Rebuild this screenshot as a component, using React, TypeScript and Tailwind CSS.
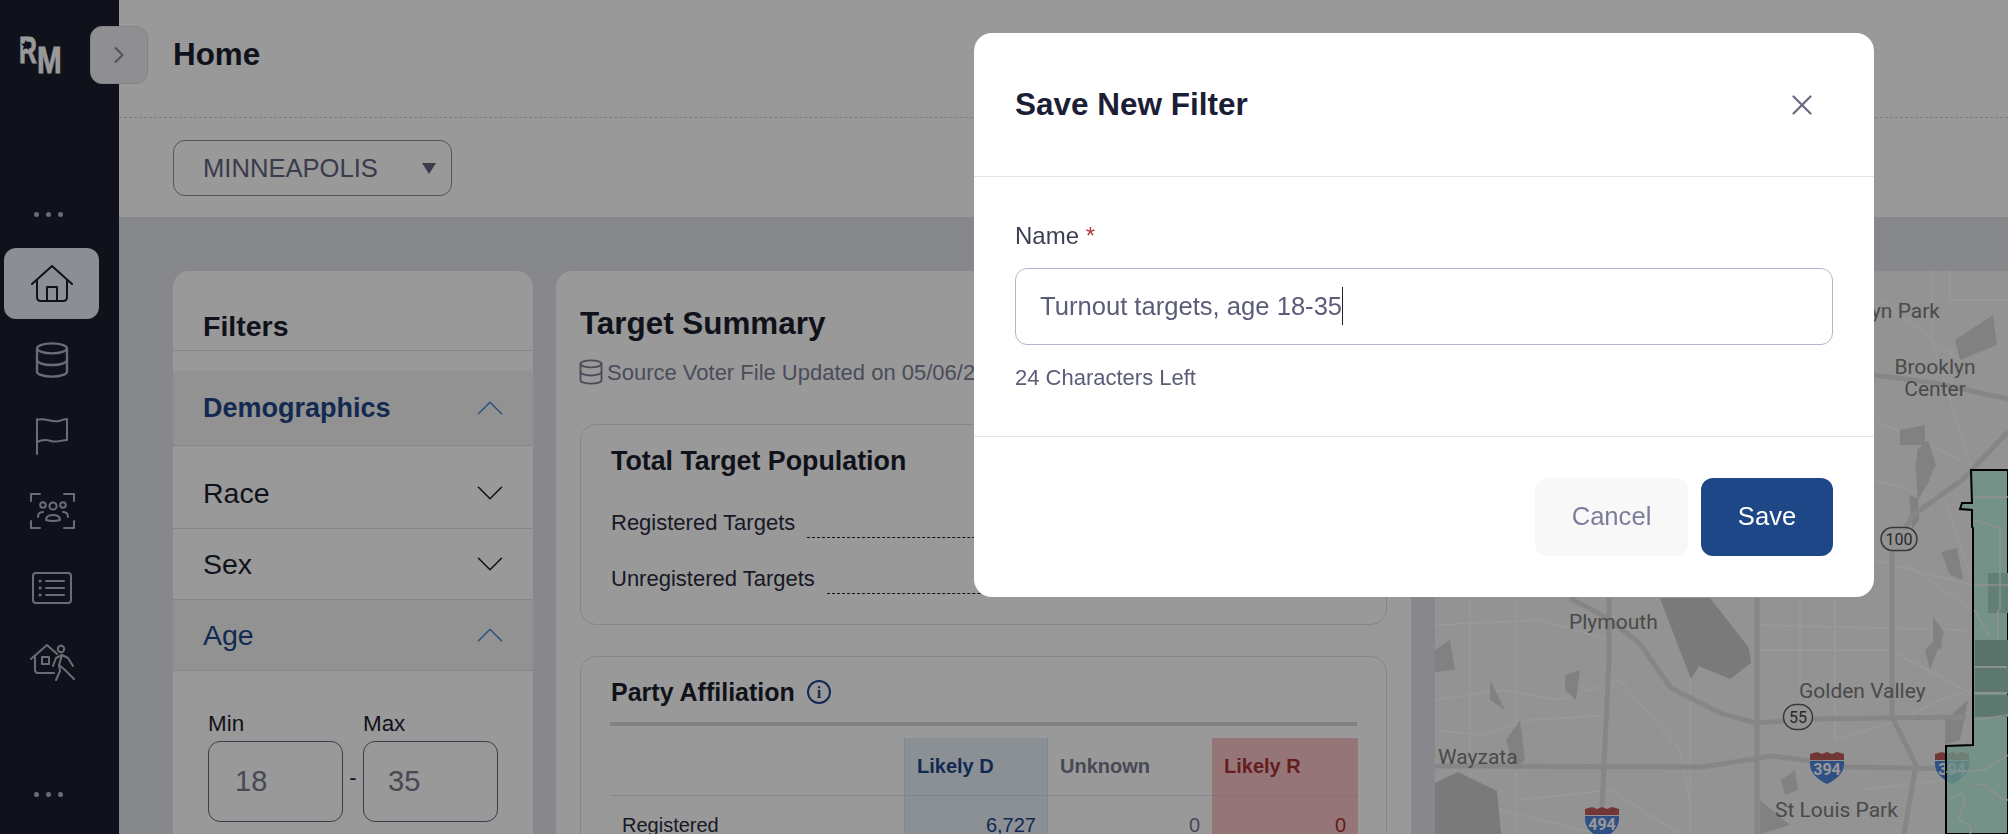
import { ChevronDown, ChevronRight, ChevronUp, Database, X } from "lucide-react";

const roads = [
  "M1435 766 L1702 767 L1772 756 L1811 761 L1846 767 L1972 769",
  "M1609 598 L1609 660 L1602 809",
  "M1757 598 L1757 834",
  "M1570 598 L1609 619 L1640 644 L1671 688 L1722 714 L1757 723 L1811 719 L1966 717",
  "M1892 553 L1892 717 L1916 765 L1904 834",
  "M1892 553 L1912 516 L1962 480 L2008 432",
  "M1874 375 L1935 383 L2008 399",
];

const minorRoads = [
  "M1435 625 L1540 620 L1610 640",
  "M1435 700 L1500 690 L1560 700 L1620 680",
  "M1435 730 L1480 735 L1530 720 L1609 715",
  "M1470 598 L1470 834",
  "M1516 598 L1516 834",
  "M1690 598 L1690 834",
  "M1800 598 L1800 700",
  "M1835 598 L1835 740",
  "M1757 625 L1965 630",
  "M1757 650 L1890 650 L1965 690",
  "M1874 480 L1945 500 L1972 580",
  "M1874 420 L1960 460",
  "M1900 560 L1972 610",
  "M1874 560 L1972 585",
  "M1520 800 L1610 790 L1680 834",
  "M1620 680 L1680 750 L1690 800",
  "M1835 740 L1900 720 L1940 700 L1972 690",
  "M1860 790 L1945 780",
  "M1932 271 L1932 340 L1972 470",
  "M1880 300 L1960 360",
  "M1950 271 L1950 300 L2008 300",
  "M1435 800 L1500 810 L1600 834",
];

const lakes = [
  "1660,598 1710,598 1749,648 1751,663 1730,679 1699,666 1691,679 1679,648",
  "1435,783 1458,772 1497,791 1501,834 1435,834",
];

const patches = [
  "1955,340 1993,315 1997,345 1960,360",
  "1917,450 1928,440 1936,465 1928,480 1917,478",
  "1909,495 1918,498 1919,520 1912,530",
  "1941,552 1957,548 1963,580 1950,575",
  "1435,650 1450,640 1455,670 1435,672",
  "1565,675 1580,670 1576,700 1565,690",
  "1506,740 1520,720 1525,760 1515,770",
  "1781,780 1795,770 1798,790 1785,795",
  "1925,650 1945,630 1930,670",
  "1915,460 1930,480 1918,500",
  "1945,720 1968,700 1960,740 1945,745",
  "1490,680 1505,710 1490,700",
  "1760,800 1790,825 1760,834",
  "1900,430 1925,425 1925,445 1900,445",
  "1933,617 1943,630 1941,650 1933,645",
];

const mapLabels = [
  { text: "Brooklyn Park", x: 1940, y: 318, anchor: "end" },
  { text: "Brooklyn", x: 1935, y: 374, anchor: "middle" },
  { text: "Center", x: 1935, y: 396, anchor: "middle" },
  { text: "Plymouth", x: 1569, y: 629, anchor: "start" },
  { text: "Golden Valley", x: 1799, y: 698, anchor: "start" },
  { text: "Wayzata", x: 1438, y: 764, anchor: "start" },
  { text: "St Louis Park", x: 1775, y: 817, anchor: "start" },
];

function InterstateShield({ x, y, label }: { x: number; y: number; label: string }) {
  return (
    <g transform={`translate(${x - 18} ${y - 16})`}>
      <path d="M1 3 L8 1 L13 3 L18 1 L23 3 L28 1 L35 3 L35 9 L1 9 Z" fill="#c05a5a" />
      <path d="M1 10 H35 C36 22 28 28 18 33 C8 28 0 22 1 10 Z" fill="#4f86dc" />
      <text x="18" y="24" textAnchor="middle" fontSize="16" fontWeight="700" fill="#ffffff" fontFamily="Roboto, sans-serif">
        {label}
      </text>
    </g>
  );
}

function RoadShield({ x, y, w, h, label }: { x: number; y: number; w: number; h: number; label: string }) {
  return (
    <g>
      <rect x={x - w / 2} y={y - h / 2} width={w} height={h} rx={h / 2} fill="#f4f4f4" stroke="#5c5c5c" strokeWidth="1.5" />
      <text x={x} y={y + 6} textAnchor="middle" fontSize="16" fill="#444444" fontFamily="Roboto, sans-serif">
        {label}
      </text>
    </g>
  );
}

function MapDrawing() {
  return (
    <svg viewBox="1435 271 573 563" className="w-full h-full block">
      <rect x="1435" y="271" width="573" height="563" fill="#f5f5f5" />
      {minorRoads.map((d) => (
        <path key={d} d={d} fill="none" stroke="#ffffff" strokeWidth="1.5" />
      ))}
      {lakes.map((p) => (
        <polygon key={p} points={p} fill="#cbcbcb" />
      ))}
      {patches.map((p) => (
        <polygon key={p} points={p} fill="#d8d8d8" />
      ))}
      {roads.map((d) => (
        <path key={d} d={d} fill="none" stroke="#e0e0e0" strokeWidth="5" />
      ))}
      {mapLabels.map((l) => (
        <text key={l.text} x={l.x} y={l.y} textAnchor={l.anchor as "start"} fontSize="21" fill="#7c7c7c" fontFamily="Roboto, sans-serif">
          {l.text}
        </text>
      ))}
      <RoadShield x={1899} y={539} w={36} h={23} label="100" />
      <RoadShield x={1798} y={717} w={29} h={25} label="55" />
      <InterstateShield x={1827} y={767} label="394" />
      <InterstateShield x={1952} y={767} label="394" />
      <InterstateShield x={1602} y={822} label="494" />
      <polygon
        points="1971,470 2008,470 2008,834 1946,834 1946,746 1973,745 1973,528 1972,527 1972,510 1960,509 1962,503 1972,503"
        fill="#b5f2df"
        fillOpacity="0.8"
        stroke="#000000"
        strokeWidth="2"
      />
      <rect x="1975" y="640" width="33" height="26" fill="#93bfb0" />
      <rect x="1975" y="668" width="33" height="24" fill="#9cc9b9" />
      <rect x="1975" y="695" width="33" height="22" fill="#9cc9b9" />
      <rect x="1988" y="573" width="20" height="40" fill="#a5d6c5" />
      <g fill="none" stroke="#f2f2f2" strokeWidth="2" strokeOpacity="0.7">
        <path d="M1974 497 H2008" />
        <path d="M1974 520 L2000 528 V610" />
        <path d="M1974 585 H2008" />
        <path d="M1974 610 L1990 636" />
        <path d="M1998 610 V640" />
        <path d="M1974 667 H2008" />
        <path d="M1974 693 H2008" />
        <path d="M1974 720 L2008 715" />
        <path d="M1946 772 L1985 770 L2008 755" />
        <path d="M1950 800 C1960 790 1970 790 1960 815 C1955 825 1975 820 1970 834" />
        <path d="M1975 785 C1990 780 1995 800 2008 800" />
      </g>
    </svg>
  );
}

function Logo() {
  return (
    <svg viewBox="0 0 50 40" className="w-[50px] h-10 overflow-visible">
      <text transform="translate(0 26) scale(0.67 1)" fontSize="37" fontWeight="700" fill="#ffffff" stroke="#ffffff" strokeWidth="0.8" fontFamily="Liberation Sans, sans-serif">
        R
      </text>
      <text transform="translate(18 36) scale(0.8 1)" fontSize="37" fontWeight="700" fill="#ffffff" stroke="#ffffff" strokeWidth="0.8" fontFamily="Liberation Sans, sans-serif">
        M
      </text>
      <polygon points="7,3 8.5,6.5 12,6.8 9.3,9.2 10.2,13 7,11 3.8,13 4.7,9.2 2,6.8 5.5,6.5" fill="#1c1e2d" />
    </svg>
  );
}

function Dots() {
  return (
    <div className="flex gap-[7px] pl-[34px]">
      <span className="w-[5px] h-[5px] rounded-full bg-[#b4b5c6]" />
      <span className="w-[5px] h-[5px] rounded-full bg-[#b4b5c6]" />
      <span className="w-[5px] h-[5px] rounded-full bg-[#b4b5c6]" />
    </div>
  );
}

function HomeIcon() {
  return (
    <svg viewBox="0 0 42 38" className="w-[42px] h-[38px]" fill="none" stroke="#1c1e2d" strokeWidth="2" strokeLinecap="round" strokeLinejoin="round">
      <path d="M1 19 L21 1 L41 19" />
      <path d="M6 15 V32 Q6 36 10 36 H32 Q36 36 36 32 V15" />
      <path d="M16 36 V22 H26 V36" />
    </svg>
  );
}

function FlagIcon() {
  return (
    <svg viewBox="0 0 34 38" className="w-[34px] h-[38px]" fill="none" stroke="#b4b5c6" strokeWidth="2" strokeLinecap="round" strokeLinejoin="round">
      <path d="M2 37 V2" />
      <path d="M2 3 C10 0 16 6 24 4 C27 3 30 2 32 2 V23 C26 23 22 26 16 24 C10 22 6 23 2 25" />
    </svg>
  );
}

function PeopleIcon() {
  return (
    <svg viewBox="0 1 60 60" className="w-[60px] h-[60px]" fill="none" stroke="#b4b5c6" strokeWidth="2" strokeLinecap="round" strokeLinejoin="round">
      <path d="M9 20 V13 H18" />
      <path d="M42 13 H52 V20" />
      <path d="M9 40 V47 H18" />
      <path d="M42 47 H52 V40" />
      <circle cx="21" cy="24" r="2.8" />
      <circle cx="31" cy="25" r="3.6" />
      <circle cx="41" cy="24" r="2.8" />
      <path d="M24 39 Q24 34 31 34 Q38 34 38 39 Q31 41 24 39 Z" />
      <path d="M16 36 Q16 31 21 31" />
      <path d="M46 36 Q46 31 41 31" />
    </svg>
  );
}

function ListIcon() {
  return (
    <svg viewBox="0 0 40 32" className="w-10 h-8 overflow-visible" fill="none" stroke="#b4b5c6" strokeWidth="2" strokeLinecap="round">
      <rect x="1" y="1" width="38" height="30" rx="3" />
      <path d="M14 9 H32" />
      <path d="M14 16 H32" />
      <path d="M14 23 H32" />
      <path d="M8 9 H8.1" strokeWidth="3" />
      <path d="M8 16 H8.1" strokeWidth="3" />
      <path d="M8 23 H8.1" strokeWidth="3" />
    </svg>
  );
}

function CanvassIcon() {
  return (
    <svg viewBox="0 3 60 60" className="w-[60px] h-[60px]" fill="none" stroke="#b4b5c6" strokeWidth="2" strokeLinecap="round" strokeLinejoin="round">
      <path d="M9 28 L25 14 L35 23" />
      <path d="M13 26 V39 Q13 42 16 42 H32" />
      <rect x="20" y="26" width="7" height="7" />
      <circle cx="39" cy="18" r="3.2" />
      <path d="M31 35 L34 27 L40 24 L46 27 L51 35" />
      <path d="M40 24 L37 34 L43 39 L52 48" />
      <path d="M37 34 L38 40 L34 49" />
    </svg>
  );
}

function SideItem({ active, children }: { active?: boolean; children: React.ReactNode }) {
  return (
    <div className={active ? "ml-1 w-[95px] h-[71px] rounded-xl bg-[#ebedf5] flex items-center justify-center" : "ml-1 w-[95px] h-[71px] flex items-center justify-center"}>
      {children}
    </div>
  );
}

function FilterRow({ label, open, bold, height }: { label: string; open?: boolean; bold?: boolean; height: string }) {
  return (
    <div className={(open ? "bg-[#f3f3f3] " : "") + height + " flex items-center justify-between pl-[30px] pr-[20px] border-b border-[#e2e2e4]"}>
      <span className={(bold ? "font-bold text-[27px] " : "text-[28.5px] ") + (open ? "text-[#1e4788]" : "text-[#1c1e2d]")}>{label}</span>
      {open ? <ChevronUp size={46} strokeWidth={0.8} className="text-[#4a8bd8]" /> : <ChevronDown size={46} strokeWidth={0.8} className="text-[#1c1e2d]" />}
    </div>
  );
}

function TargetLine({ label }: { label: string }) {
  return (
    <div className="flex items-end gap-3 h-[39px]">
      <span className="text-[22px] leading-[28px] mb-[2px] text-[#2a2c3d]">{label}</span>
      <span className="flex-1 border-b border-dashed border-[#1c1e2d] mb-[1px]" />
    </div>
  );
}

export default function App() {
  return (
    <div className="relative flex h-screen w-full overflow-hidden bg-[#e1e3ea] font-['Liberation_Sans',Arial,sans-serif]">
      <aside className="w-[119px] shrink-0 bg-[#1c1e2d] flex flex-col">
        <div className="h-[248px] flex flex-col">
          <div className="pl-[19px] pt-[37px] h-[212px]">
            <Logo />
          </div>
          <Dots />
        </div>
        <nav className="flex flex-col gap-[5px]">
          <SideItem active>
            <HomeIcon />
          </SideItem>
          <SideItem>
            <Database size={40} strokeWidth={1.4} className="text-[#b4b5c6]" />
          </SideItem>
          <SideItem>
            <FlagIcon />
          </SideItem>
          <SideItem>
            <PeopleIcon />
          </SideItem>
          <SideItem>
            <ListIcon />
          </SideItem>
          <SideItem>
            <CanvassIcon />
          </SideItem>
        </nav>
        <div className="mt-[93px]">
          <Dots />
        </div>
      </aside>

      <button className="absolute left-[90px] top-[26px] w-[58px] h-[58px] rounded-xl bg-[#eeeef2] border border-[#dcdde3] flex items-center justify-center text-[#8e8fa3]">
        <ChevronRight size={28} strokeWidth={2} />
      </button>

      <main className="flex-1 min-w-0 flex flex-col">
        <header className="h-[118px] shrink-0 bg-white border-b border-dashed border-[#d0d1d8] flex items-center pl-[54px] pb-[8px]">
          <h1 className="text-[31.4px] font-bold text-[#1c1e2d]">Home</h1>
        </header>
        <div className="h-[99px] shrink-0 bg-white flex items-start pl-[54px] pt-[22px]">
          <div className="w-[279px] h-[56px] rounded-xl border border-[#8e8fa3] flex items-center justify-between pl-[29px] pr-[15px]">
            <span className="text-[25.6px] text-[#62647e]">MINNEAPOLIS</span>
            <span className="w-0 h-0 border-x-[7px] border-x-transparent border-t-[11px] border-t-[#62647e]" />
          </div>
        </div>

        <div className="flex-1 min-h-0 flex pl-[54px] pt-[54px] gap-[23px]">
          <section className="w-[360px] shrink-0 bg-white rounded-t-2xl">
            <div className="h-[80px] flex items-end pl-[30px] pb-[6px] border-b border-[#e2e2e4]">
              <h2 className="text-[28.5px] leading-[36px] font-bold text-[#1c1e2d]">Filters</h2>
            </div>
            <div className="pt-[20px]">
              <FilterRow label="Demographics" open bold height="h-[75px]" />
              <FilterRow label="Race" height="h-[83px] pt-[12px]" />
              <FilterRow label="Sex" height="h-[71px]" />
              <FilterRow label="Age" open height="h-[71px]" />
            </div>
            <div className="pl-[35px] pt-[40px] flex">
              <div>
                <div className="text-[22.4px] leading-[26px] text-[#1c1e2d]">Min</div>
                <div className="mt-[4px] w-[135px] h-[81px] rounded-xl border border-[#62647e] flex items-center pl-[26px] text-[29px] text-[#787a8c]">18</div>
              </div>
              <span className="w-[20px] text-center text-[22px] text-[#1c1e2d] pt-[50px]">-</span>
              <div>
                <div className="text-[22.4px] leading-[26px] text-[#1c1e2d]">Max</div>
                <div className="mt-[4px] w-[135px] h-[81px] rounded-xl border border-[#62647e] flex items-center pl-[24px] text-[29px] text-[#787a8c]">35</div>
              </div>
            </div>
          </section>

          <section className="w-[855px] shrink-0 bg-white rounded-t-2xl px-[24px]">
            <h2 className="pt-[35px] text-[31.4px] leading-[36px] font-bold text-[#1c1e2d]">Target Summary</h2>
            <div className="mt-[15px] flex items-center gap-[2px] h-[30px]">
              <Database size={28} strokeWidth={1.6} className="text-[#7c7f96] -ml-[3px]" />
              <span className="text-[22px] text-[#7c7f96]">Source Voter File Updated on 05/06/2024</span>
            </div>
            <div className="mt-[37px] h-[201px] rounded-2xl border border-[#e2e2e4] px-[30px] pt-[20px]">
              <h3 className="text-[26.8px] leading-[32px] font-bold text-[#1c1e2d]">Total Target Population</h3>
              <div className="mt-[23px]">
                <TargetLine label="Registered Targets" />
              </div>
              <div className="mt-[17px]">
                <TargetLine label="Unregistered Targets" />
              </div>
            </div>
            <div className="mt-[31px] rounded-t-2xl border border-[#e2e2e4] px-[29px] pt-[20px] h-[200px]">
              <div className="flex items-center gap-[12px] h-[30px] pl-px">
                <h3 className="text-[25px] leading-[30px] font-bold text-[#1c1e2d]">Party Affiliation</h3>
                <svg viewBox="0 0 24 24" className="w-6 h-6">
                  <circle cx="12" cy="12" r="11" fill="none" stroke="#1e4788" strokeWidth="2" />
                  <text x="12" y="18" textAnchor="middle" fontSize="16" fontWeight="700" fill="#1e4788" fontFamily="Liberation Serif, serif">
                    i
                  </text>
                </svg>
              </div>
              <div className="mt-[15px] h-[4px] bg-[#d8d8dc]" />
              <div className="mt-[12px] grid grid-cols-[294px_144px_164px_146px]">
                <div className="h-[58px] border-b border-[#e2e2e4]" />
                <div className="h-[58px] pb-[2px] bg-[#e8f1f8] border-x border-b border-[#d6dfe8] flex items-center pl-[12px] text-[20px] font-bold text-[#1e4788]">Likely D</div>
                <div className="h-[58px] pb-[2px] border-b border-[#e2e2e4] flex items-center pl-[12px] text-[20px] font-bold text-[#787a8c]">Unknown</div>
                <div className="h-[58px] pb-[2px] bg-[#f8c4c7] border-b border-[#e8b8bb] flex items-center pl-[12px] text-[20px] font-bold text-[#a83234]">Likely R</div>
                <div className="h-[60px] pl-[12px] pt-[17px] text-[20px] leading-[24px] text-[#2a2c3d]">Registered</div>
                <div className="h-[60px] bg-[#e8f1f8] border-x border-[#d6dfe8] pr-[11px] pt-[17px] text-right text-[20px] leading-[24px] text-[#1e4788]">6,727</div>
                <div className="h-[60px] pr-[12px] pt-[17px] text-right text-[20px] leading-[24px] text-[#787a8c]">0</div>
                <div className="h-[60px] bg-[#f8c4c7] pr-[12px] pt-[17px] text-right text-[20px] leading-[24px] text-[#a83234]">0</div>
              </div>
            </div>
          </section>

          <section className="flex-1 min-w-0 ml-px">
            <MapDrawing />
          </section>
        </div>
      </main>

      <div className="fixed inset-0 bg-black/40 flex justify-end items-start pt-[33px] pr-[134px]">
        <div className="w-[900px] h-[564px] bg-white rounded-[18px] flex flex-col">
          <div className="h-[144px] shrink-0 border-b border-[#e4e4e8] flex items-center justify-between pl-[41px] pr-[55px]">
            <h2 className="text-[31.5px] font-bold text-[#1c1e37]">Save New Filter</h2>
            <X size={34} strokeWidth={1.6} className="text-[#6a6c86]" />
          </div>
          <div className="h-[260px] shrink-0 border-b border-[#e4e4e8] px-[41px] pt-[43px]">
            <label className="block text-[24px] leading-[32px] text-[#3d3f56]">
              Name <span className="text-[#b03a3a]">*</span>
            </label>
            <div className="mt-[16px] h-[77px] rounded-xl border border-[#b4b5c6] flex items-center pl-[24px] pb-[1px]">
              <span className="text-[25.6px] leading-[38px] text-[#5b5d78] border-r border-[#1c1e2d]">Turnout targets, age 18-35</span>
            </div>
            <p className="mt-[19px] text-[22px] leading-[28px] text-[#5b5d78]">24 Characters Left</p>
          </div>
          <div className="flex justify-end gap-[13px] px-[41px] pt-[41px]">
            <button className="w-[153px] h-[78px] pb-[1px] rounded-xl bg-[#f8f8f9] text-[25.6px] text-[#7c7e99]">Cancel</button>
            <button className="w-[132px] h-[78px] pb-[1px] rounded-xl bg-[#1e4788] text-[25.6px] text-white">Save</button>
          </div>
        </div>
      </div>
    </div>
  );
}
